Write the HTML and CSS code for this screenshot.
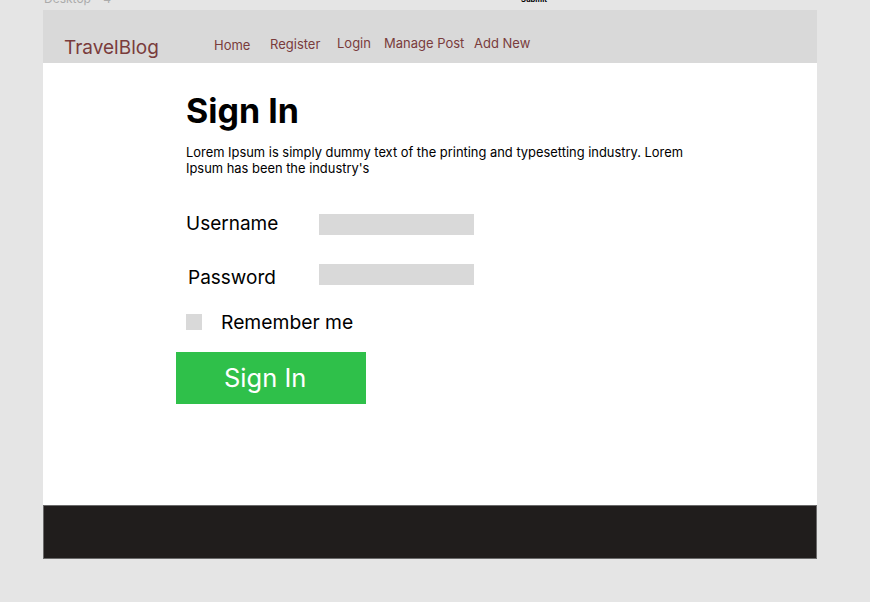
FILE: index.html
```html
<!DOCTYPE html>
<html lang="en">
<head>
<meta charset="utf-8">
<title>TravelBlog - Sign In</title>
<link rel="stylesheet" href="styles.css">
</head>
<body>
<div class="canvas">
  <div class="frame-label">Desktop - 4</div>
  <div class="stray-label">Submit</div>
  <div class="frame">
    <header class="header">
      <div class="brand">TravelBlog</div>
      <nav class="nav">
        <a class="nav-link nav-home" href="#">Home</a>
        <a class="nav-link nav-register" href="#">Register</a>
        <a class="nav-link" href="#">Login</a>
        <a class="nav-link" href="#">Manage Post</a>
        <a class="nav-link" href="#">Add New</a>
      </nav>
    </header>
    <main class="main">
      <div class="content">
        <h1 class="title">Sign In</h1>
        <p class="intro">Lorem Ipsum is simply dummy text of the printing and typesetting industry. Lorem Ipsum has been the industry's</p>
        <form class="form">
          <div class="row">
            <label class="label label-user">Username</label>
            <div class="input"></div>
          </div>
          <div class="row">
            <label class="label label-pass">Password</label>
            <div class="input"></div>
          </div>
          <div class="remember">
            <span class="checkbox"></span>
            <span class="remember-text">Remember me</span>
          </div>
          <div class="button">Sign In</div>
        </form>
      </div>
    </main>
    <footer class="footer"></footer>
  </div>
</div>
</body>
</html>
```

FILE: styles.css
```css
* { box-sizing: border-box; }
html, body { margin: 0; padding: 0; }
body {
  background: #e5e5e5;
  font-family: Inter, "Noto Sans", sans-serif;
  width: 870px;
  height: 602px;
  overflow: hidden;
}
.canvas {
  position: relative;
  padding: 10px 0 0 43px;
}
.frame-label {
  position: absolute;
  left: 44px;
  top: -8px;
  font-size: 12px;
  line-height: 14px;
  color: #ababab;
}
.stray-label {
  position: absolute;
  left: 521px;
  top: -4px;
  font-size: 7.5px;
  line-height: 8px;
  font-weight: 700;
  color: #000;
}
.frame {
  width: 774px;
  display: flex;
  flex-direction: column;
}
.header {
  height: 53px;
  background: #d9d9d9;
  display: flex;
  align-items: flex-start;
  padding-left: 21px;
  color: #7a3c3c;
}
.brand {
  width: 150px;
  font-size: 19px;
  line-height: 24px;
  margin-top: 26px;
}
.nav {
  display: grid;
  grid-template-columns: 56px 67px 47px 90px auto;
  margin-top: 25px;
}
.nav-link {
  color: #7a3c3c;
  text-decoration: none;
  font-size: 13px;
  line-height: 16px;
}
.nav-home { margin-top: 2px; }
.nav-register { margin-top: 1px; }
.main {
  height: 442px;
  background: #fff;
  padding: 28px 0 0 143px;
}
.content {
  width: 520px;
}
.title {
  margin: 0;
  font-size: 34px;
  line-height: 40.8px;
  font-weight: 700;
  color: #000;
}
.intro {
  width: 510px;
  margin: 13.5px 0 0;
  font-size: 12.9px;
  line-height: 15.5px;
  color: #000;
}
.form {
  margin-top: 37.5px;
  display: flex;
  flex-direction: column;
}
.row {
  display: flex;
  align-items: flex-start;
  height: 21px;
  margin-bottom: 29px;
}
.label {
  width: 133px;
  font-size: 19px;
  line-height: 21px;
  color: #000;
}
.label-user { margin-top: -1px; }
.label-pass { margin-top: 3px; padding-left: 2px; }
.input {
  width: 155px;
  height: 21px;
  background: #d9d9d9;
}
.remember {
  display: flex;
  align-items: center;
  height: 21px;
  margin-top: -2px;
}
.checkbox {
  width: 16px;
  height: 16px;
  background: #d9d9d9;
  margin-right: 19px;
}
.remember-text {
  font-size: 19.3px;
  line-height: 21px;
  color: #000;
}
.button {
  margin: 19px 0 0 -10px;
  width: 190px;
  height: 52px;
  background: #2fc04a;
  color: #fff;
  font-size: 25.5px;
  line-height: 52px;
  padding-left: 48px;
}
.footer {
  height: 54px;
  background: #201d1c;
  border: 1px solid #6a6a6a;
}
```
